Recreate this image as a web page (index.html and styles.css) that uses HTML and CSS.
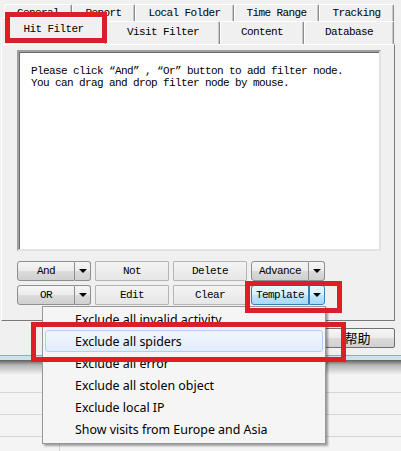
FILE: index.html
```html
<!DOCTYPE html>
<html lang="en">
<head>
  <meta charset="UTF-8" />
  <title>Filter Options</title>
  <link rel="stylesheet" href="styles.css">
</head>
<body>
  <div class="dialog">
    <div class="tabs">
      <div class="tab-row back">
        <div class="tab t-general">General</div>
        <div class="tab t-report">Report</div>
        <div class="tab t-folder">Local Folder</div>
        <div class="tab t-time">Time Range</div>
        <div class="tab t-track">Tracking</div>
      </div>
      <div class="tab-row front">
        <div class="tab t-hit active">Hit Filter</div>
        <div class="tab t-visit">Visit Filter</div>
        <div class="tab t-content">Content</div>
        <div class="tab t-db">Database</div>
      </div>
    </div>

    <div class="page">
      <div class="filter-box">
        <p>Please click “And” , “Or” button to add filter node.</p>
        <p>You can drag and drop filter node by mouse.</p>
      </div>

      <div class="btn-row">
        <div class="split">
          <button class="btn main">And</button><button class="btn arrow"><span class="caret"></span></button>
        </div>
        <button class="btn flat">Not</button>
        <button class="btn flat">Delete</button>
        <div class="split">
          <button class="btn main">Advance</button><button class="btn arrow"><span class="caret"></span></button>
        </div>
      </div>
      <div class="btn-row">
        <div class="split">
          <button class="btn main">OR</button><button class="btn arrow"><span class="caret"></span></button>
        </div>
        <button class="btn flat">Edit</button>
        <button class="btn flat">Clear</button>
        <div class="split hot">
          <button class="btn main">Template</button><button class="btn arrow"><span class="caret"></span></button>
        </div>
      </div>
    </div>

    <div class="dlg-buttons">
      <button class="btn dlg">确定</button>
      <button class="btn dlg">取消</button>
      <button class="btn dlg">帮助</button>
    </div>
  </div>

  <div class="frame-edge"></div>

  <div class="host-list">
    <div class="host-row first"></div>
    <div class="host-row"></div>
    <div class="host-row"></div>
    <div class="host-row"></div>
  </div>

  <!-- template drop-down menu -->
  <ul class="menu">
    <li>Exclude all invalid activity</li>
    <li class="hover">Exclude all spiders</li>
    <li>Exclude all error</li>
    <li>Exclude all stolen object</li>
    <li>Exclude local IP</li>
    <li>Show visits from Europe and Asia</li>
  </ul>

  <!-- red call-out frames -->
  <div class="mark mark-tab"></div>
  <div class="mark mark-template"></div>
  <div class="mark mark-item"></div>
</body>
</html>
```

FILE: styles.css
```css
body {
  margin: 0;
  width: 401px;
  height: 451px;
  overflow: hidden;
  position: relative;
  background: #f0f0f0;
  font-family: "Liberation Mono", monospace;
  font-size: 11px;
  letter-spacing: -0.6px;
  color: #000;
}

.dialog {
  height: 355px;
  background: #f0f0f0;
}

/* tab strip, two rows */
.tabs {
  padding-top: 4px;
}
.tab-row {
  display: flex;
}
.tab {
  box-sizing: border-box;
  text-align: center;
  border-top: 1px solid #fff;
  border-left: 1px solid #fff;
  border-right: 1px solid #8c8c8c;
  box-shadow: inset -1px 0 0 #c8c8c8;
  border-radius: 2px 2px 0 0;
}
.back .tab {
  height: 17px;
  line-height: 17px;
}
.back { padding-left: 4px; }
.t-general { width: 68px; }
.t-report { width: 63px; }
.t-folder { width: 99px; }
.t-time { width: 85px; }
.t-track { width: 75px; }

.front .tab {
  height: 23px;
  line-height: 18px;
  padding-top: 1px;
}
.front { padding-left: 1px; }
.t-hit { width: 105px; }
.t-visit { width: 114px; }
.t-content { width: 84px; }
.t-db { width: 90px; }
.front .tab.active {
  height: 27px;
  margin-top: -4px;
  line-height: 21px;
  position: relative;
  background: #f0f0f0;
  border-bottom: none;
}

.page {
  box-sizing: border-box;
  width: 394px;
  height: 277px;
  margin-left: 1px;
  padding: 5px 14px 15px 15px;
  border: 1px solid #fff;
  border-right-color: #7a7a7a;
  border-bottom-color: #7a7a7a;
}

.filter-box {
  box-sizing: border-box;
  width: 364px;
  height: 201px;
  background: #fff;
  border: 2px solid #a0a0a0;
  border-right-color: #e3e3e3;
  border-bottom-color: #e3e3e3;
  box-shadow: inset 1px 1px 0 #696969;
  padding: 13px 0 0 12px;
}
.filter-box p {
  margin: 0;
  line-height: 12px;
}

.btn-row {
  display: flex;
  gap: 4px;
  margin-top: 10px;
}
.btn-row + .btn-row {
  margin-top: 4px;
}

.btn {
  font: inherit;
  letter-spacing: inherit;
  color: #000;
  margin: 0;
  padding: 0;
  height: 20px;
  box-sizing: border-box;
  border: 1px solid #8e8f8f;
  border-radius: 3px;
  background: linear-gradient(#f6f6f6, #ebebeb 50%, #dbdbdb 51%, #d0d0d0);
}
.btn.flat {
  width: 74px;
  border-color: #b5b5b5;
  background: linear-gradient(#f4f4f4, #e6e6e6);
  border-radius: 1px;
}
.split {
  display: flex;
}
.split .main {
  width: 58px;
  border-radius: 3px 0 0 3px;
}
.split .arrow {
  width: 16px;
  border-left: none;
  border-radius: 0 3px 3px 0;
  display: flex;
  align-items: center;
  justify-content: center;
}
.caret {
  width: 0;
  height: 0;
  border-left: 4px solid transparent;
  border-right: 4px solid transparent;
  border-top: 4px solid #000;
}
.split.hot .btn {
  border-color: #3c7fb1;
  background: linear-gradient(#eaf6fd, #d9f0fc 50%, #bee6fd 51%, #a7d9f5);
}
.split.hot .arrow {
  border-left: 1px solid #3c7fb1;
}

.dlg-buttons {
  display: flex;
  justify-content: flex-end;
  gap: 6px;
  padding: 7px 6px 0 0;
}
.btn.dlg {
  width: 75px;
  font-family: "Noto Sans CJK SC", sans-serif;
  font-size: 13px;
  letter-spacing: 0;
  line-height: 18px;
  border-color: #707070;
  border-radius: 2px;
}

/* bottom of the window frame and its drop shadow */
.frame-edge {
  height: 5px;
  border-top: 1px solid #87aad6;
  box-sizing: border-box;
  background: #cfe0f4;
}

.host-list {
  height: 91px;
  background: linear-gradient(#5e5e5e, #b5b5b5 5px, #f4f4f4 15px);
  position: relative;
}
.host-row {
  height: 22px;
  border-bottom: 1px solid #d6d6d6;
  box-sizing: border-box;
}
.host-row.first {
  height: 11px;
}
.host-list::after {
  content: "";
  position: absolute;
  left: 59px;
  top: 12px;
  bottom: 0;
  border-left: 1px solid #d6d6d6;
}

.menu {
  position: absolute;
  left: 42px;
  top: 306px;
  width: 284px;
  box-sizing: border-box;
  margin: 0;
  padding: 1px 2px 3px;
  list-style: none;
  background: #f5f5f5;
  border: 1px solid #979797;
  box-shadow: 2px 2px 2px rgba(0, 0, 0, 0.35);
  font-family: "Noto Sans", sans-serif;
  font-size: 12.4px;
  letter-spacing: 0;
}
.menu li {
  height: 22px;
  line-height: 22px;
  padding-left: 29px;
  box-sizing: border-box;
  border: 1px solid transparent;
  border-radius: 3px;
}
.menu li.hover {
  border-color: #aecff7;
  background: linear-gradient(#f2f7fe, #e0ecfb);
}

.mark {
  position: absolute;
  box-sizing: border-box;
  border: 5px solid #dc1f26;
}
.mark-tab {
  left: 5px;
  top: 12px;
  width: 102px;
  height: 31px;
}
.mark-template {
  left: 245px;
  top: 281px;
  width: 97px;
  height: 32px;
}
.mark-item {
  left: 31px;
  top: 322px;
  width: 315px;
  height: 40px;
}
```
